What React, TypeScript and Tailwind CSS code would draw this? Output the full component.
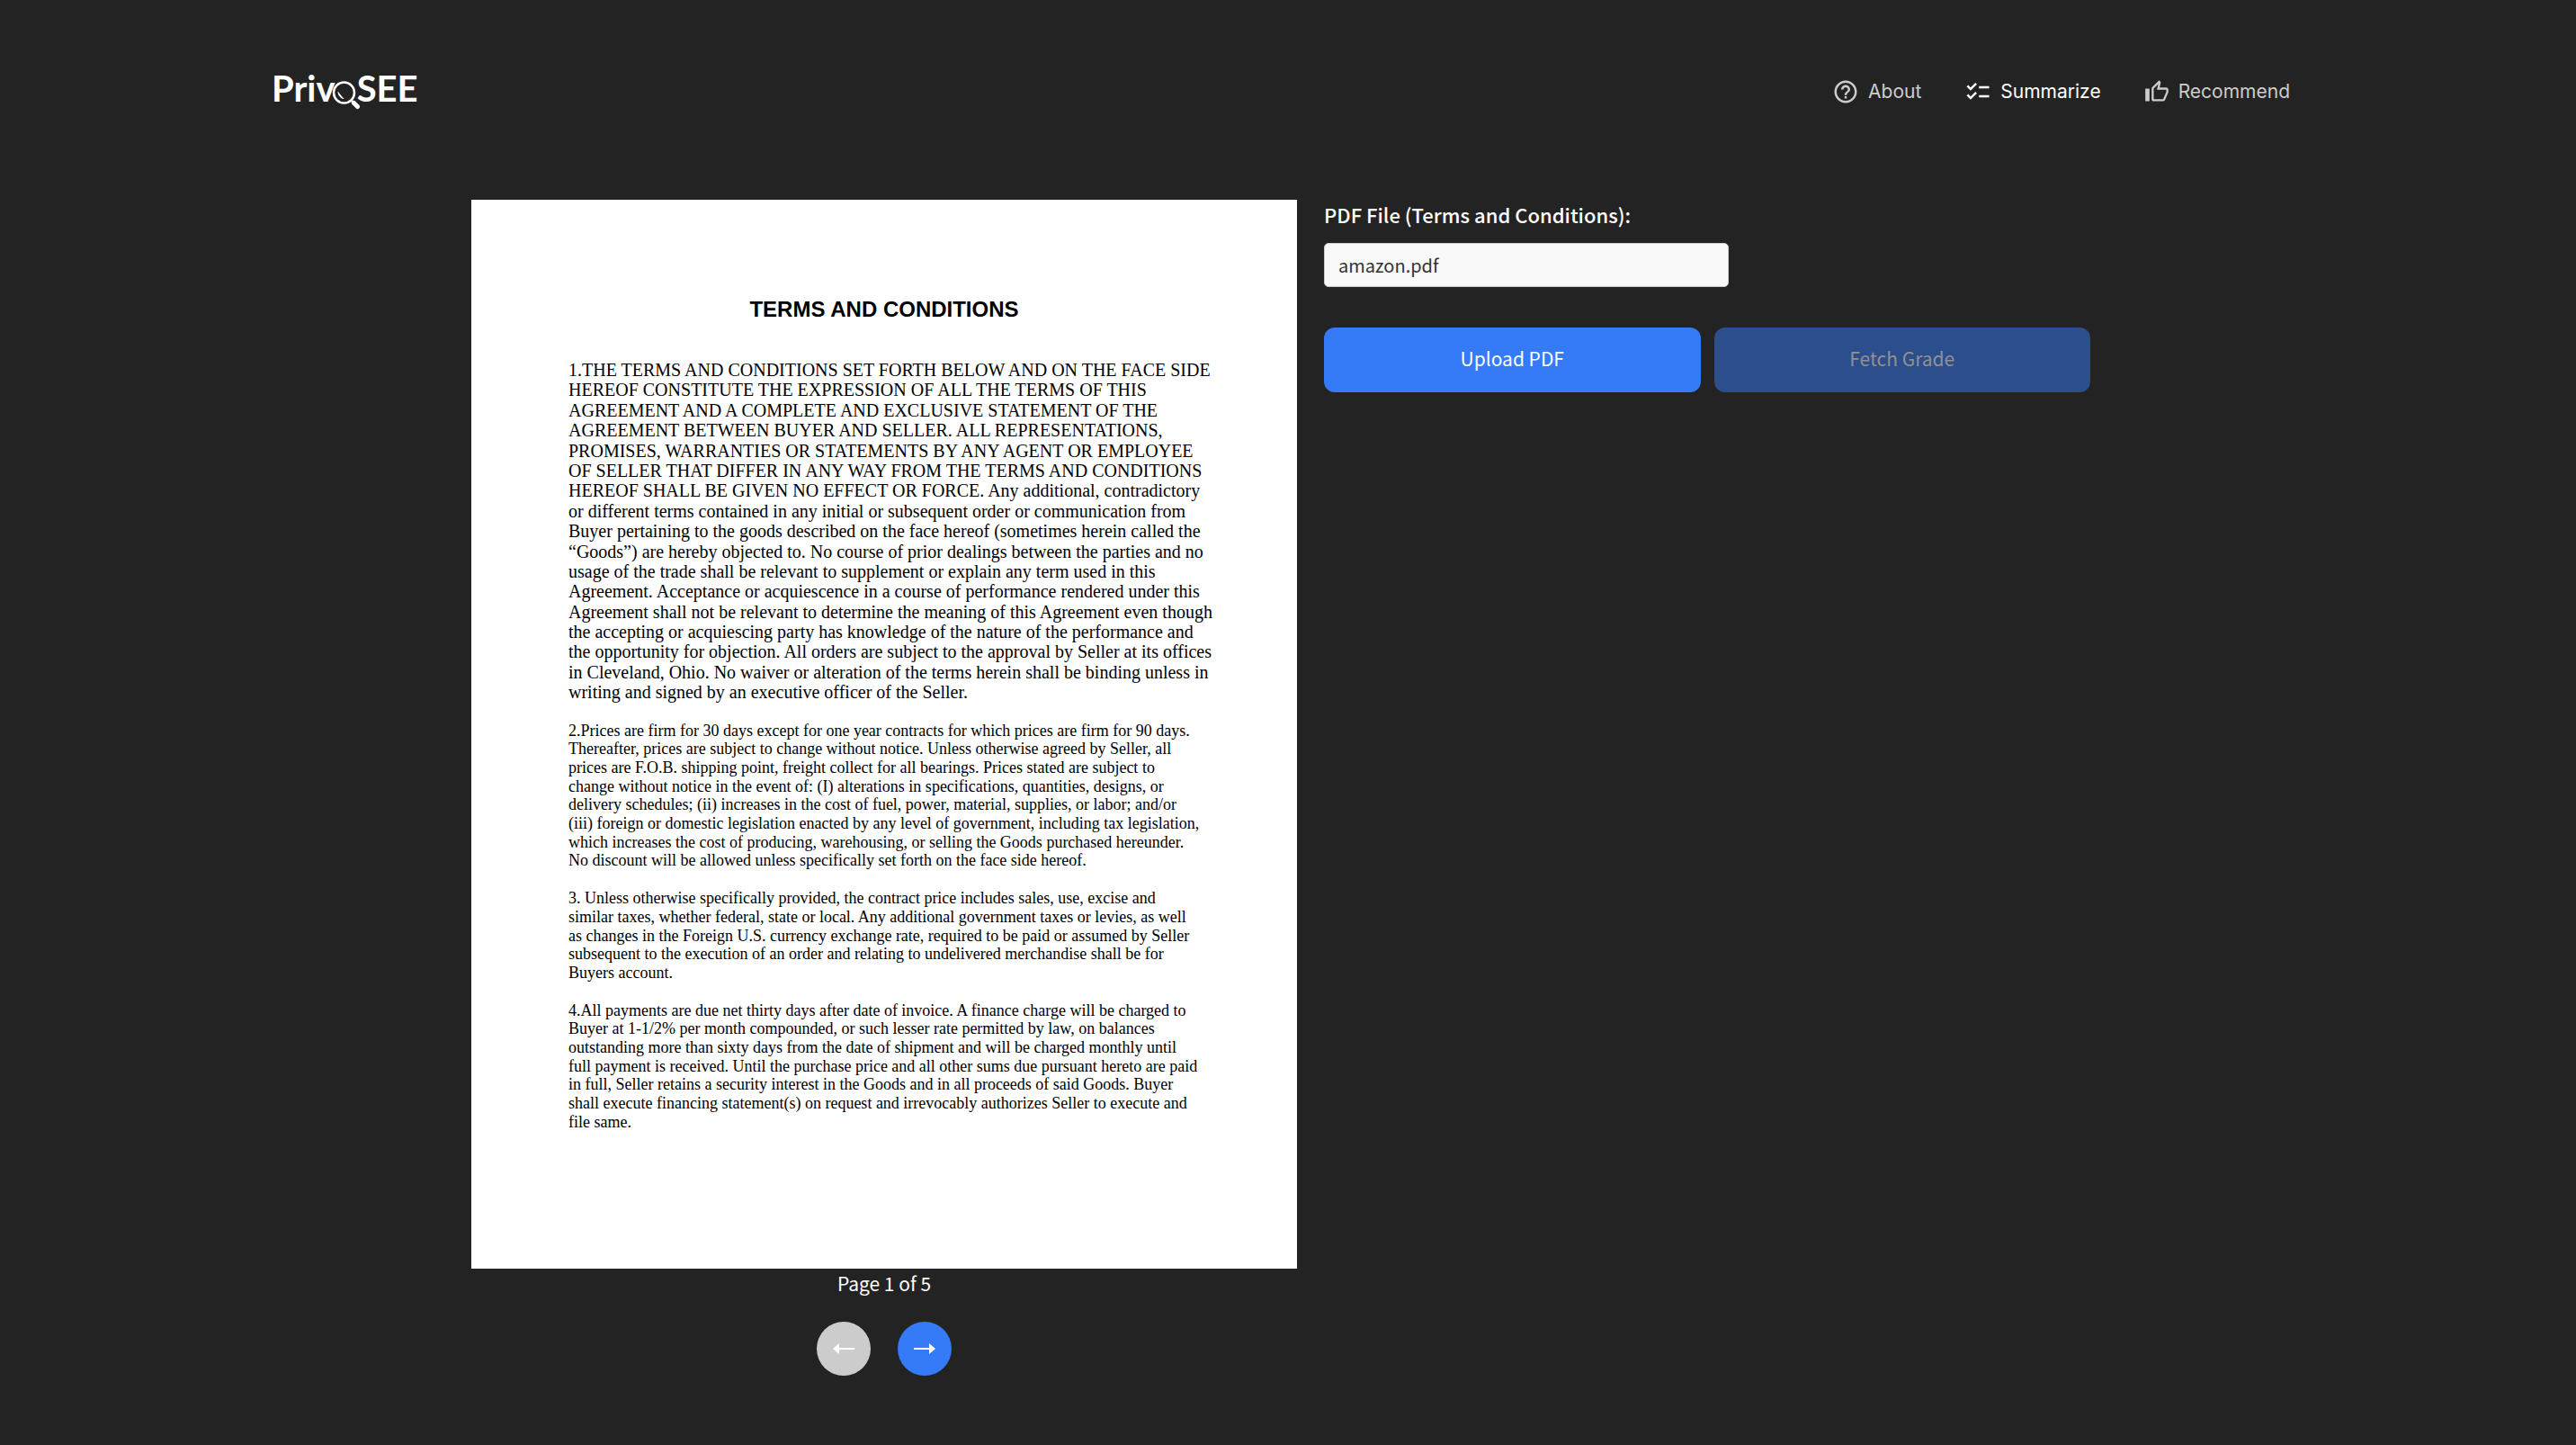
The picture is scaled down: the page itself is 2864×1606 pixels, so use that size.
import { MdChecklist, MdHelpOutline, MdOutlineThumbUp } from "react-icons/md";

const sections = [
  {
    style: "text-[20px] leading-[1.12]",
    lines: [
      "1.THE TERMS AND CONDITIONS SET FORTH BELOW AND ON THE FACE SIDE",
      "HEREOF CONSTITUTE THE EXPRESSION OF ALL THE TERMS OF THIS",
      "AGREEMENT AND A COMPLETE AND EXCLUSIVE STATEMENT OF THE",
      "AGREEMENT BETWEEN BUYER AND SELLER. ALL REPRESENTATIONS,",
      "PROMISES, WARRANTIES OR STATEMENTS BY ANY AGENT OR EMPLOYEE",
      "OF SELLER THAT DIFFER IN ANY WAY FROM THE TERMS AND CONDITIONS",
      "HEREOF SHALL BE GIVEN NO EFFECT OR FORCE. Any additional, contradictory",
      "or different terms contained in any initial or subsequent order or communication from",
      "Buyer pertaining to the goods described on the face hereof (sometimes herein called the",
      "“Goods”) are hereby objected to. No course of prior dealings between the parties and no",
      "usage of the trade shall be relevant to supplement or explain any term used in this",
      "Agreement. Acceptance or acquiescence in a course of performance rendered under this",
      "Agreement shall not be relevant to determine the meaning of this Agreement even though",
      "the accepting or acquiescing party has knowledge of the nature of the performance and",
      "the opportunity for objection. All orders are subject to the approval by Seller at its offices",
      "in Cleveland, Ohio. No waiver or alteration of the terms herein shall be binding unless in",
      "writing and signed by an executive officer of the Seller.",
    ],
  },
  {
    style: "text-[18px] leading-[1.15]",
    lines: [
      "2.Prices are firm for 30 days except for one year contracts for which prices are firm for 90 days.",
      "Thereafter, prices are subject to change without notice. Unless otherwise agreed by Seller, all",
      "prices are F.O.B. shipping point, freight collect for all bearings. Prices stated are subject to",
      "change without notice in the event of: (I) alterations in specifications, quantities, designs, or",
      "delivery schedules; (ii) increases in the cost of fuel, power, material, supplies, or labor; and/or",
      "(iii) foreign or domestic legislation enacted by any level of government, including tax legislation,",
      "which increases the cost of producing, warehousing, or selling the Goods purchased hereunder.",
      "No discount will be allowed unless specifically set forth on the face side hereof.",
    ],
  },
  {
    style: "text-[18px] leading-[1.15]",
    lines: [
      "3. Unless otherwise specifically provided, the contract price includes sales, use, excise and",
      "similar taxes, whether federal, state or local. Any additional government taxes or levies, as well",
      "as changes in the Foreign U.S. currency exchange rate, required to be paid or assumed by Seller",
      "subsequent to the execution of an order and relating to undelivered merchandise shall be for",
      "Buyers account.",
    ],
  },
  {
    style: "text-[18px] leading-[1.15]",
    lines: [
      "4.All payments are due net thirty days after date of invoice. A finance charge will be charged to",
      "Buyer at 1-1/2% per month compounded, or such lesser rate permitted by law, on balances",
      "outstanding more than sixty days from the date of shipment and will be charged monthly until",
      "full payment is received. Until the purchase price and all other sums due pursuant hereto are paid",
      "in full, Seller retains a security interest in the Goods and in all proceeds of said Goods. Buyer",
      "shall execute financing statement(s) on request and irrevocably authorizes Seller to execute and",
      "file same.",
    ],
  },
];

const navItems = [
  { label: "About", Icon: MdHelpOutline, iconSize: "size-[30px]", active: false },
  { label: "Summarize", Icon: MdChecklist, iconSize: "size-[30px]", active: true },
  { label: "Recommend", Icon: MdOutlineThumbUp, iconSize: "size-[28px]", active: false },
];

function Logo() {
  return (
    <a
      href="#home"
      aria-label="PrivoSEE"
      className="flex items-center font-['Lato'] text-[40px] leading-[48px] font-bold text-white"
    >
      <span>Priv</span>
      <svg viewBox="0 0 32 32" className="mt-4 -mr-1 -ml-1 size-8" fill="none" stroke="currentColor">
        <circle cx="13.500" cy="13" r="11.500" strokeWidth="2.500" />
        <path d="M7 12.500c.4 3.800 2.600 6.300 6 7.200-2-1.900-3.600-4-6-7.200z" strokeWidth="1" fill="currentColor" />
        <path d="M22 22l2 2" strokeWidth="2.500" />
        <path d="M24.500 24.500l4 4" strokeWidth="5" strokeLinecap="round" />
      </svg>
      <span>SEE</span>
    </a>
  );
}

function Header() {
  return (
    <header className="mx-auto flex w-full max-w-[2244px] items-end justify-between pt-[74px]">
      <Logo />
      <nav className="flex items-center gap-12 font-['Inter'] text-[21px] leading-[40px]">
        {navItems.map(({ label, Icon, iconSize, active }) => (
          <a
            key={label}
            href={`#${label.toLowerCase()}`}
            aria-current={active ? "page" : undefined}
            className={`flex items-center gap-[10px] ${active ? "text-white" : "text-[#cccccc]"}`}
          >
            <Icon className={iconSize} />
            {label}
          </a>
        ))}
      </nav>
    </header>
  );
}

function DocumentPage() {
  return (
    <article className="min-h-[1188px] w-full bg-white px-[108px] pt-[108px] text-black">
      <h1 className="mb-[42px] text-center font-['Liberation_Sans'] text-[24px] leading-[28px] font-bold">
        TERMS AND CONDITIONS
      </h1>
      <div className="flex flex-col gap-[21px] font-['Liberation_Serif'] whitespace-nowrap">
        {sections.map((section) => (
          <p key={section.lines[0]} className={section.style}>
            {section.lines.map((line) => (
              <span key={line} className="block">
                {line}
              </span>
            ))}
          </p>
        ))}
      </div>
    </article>
  );
}

function Arrow({ className = "" }: { className?: string }) {
  return (
    <svg viewBox="0 0 24 12" className={`h-3 w-6 ${className}`} fill="currentColor">
      <path d="M0 5h17V0l7 6-7 6V7H0z" />
    </svg>
  );
}

export default function App() {
  return (
    <div className="min-h-screen bg-[#232323] pr-4 font-['Noto_Sans_CJK_SC',sans-serif] text-white">
      <Header />
      <main className="mx-auto flex w-full max-w-[1800px] items-start gap-[30px] pt-[100px]">
        <section className="flex w-[918px] shrink-0 flex-col items-center">
          <DocumentPage />
          <p className="text-[21px] leading-[32px]">Page 1 of 5</p>
          <div className="mt-[27px] flex gap-[30px]">
            <button
              type="button"
              disabled
              aria-label="Previous page"
              className="flex size-[60px] items-center justify-center rounded-full bg-[#cccccc]"
            >
              <Arrow className="rotate-180" />
            </button>
            <button
              type="button"
              aria-label="Next page"
              className="flex size-[60px] items-center justify-center rounded-full bg-[#357af6]"
            >
              <Arrow />
            </button>
          </div>
        </section>
        <form className="flex flex-1 flex-col">
          <label htmlFor="pdf-file" className="text-[22px] leading-[32px] font-medium">
            PDF File (Terms and Conditions):
          </label>
          <input
            id="pdf-file"
            type="text"
            readOnly
            value="amazon.pdf"
            className="mt-4 h-[49px] w-[450px] rounded-[5px] border border-[#cccccc] bg-[#f9f9f9] px-[15px] text-[20px] text-[#333333]"
          />
          <div className="mt-[45px] grid grid-cols-2 gap-[15px] text-[21px] leading-[32px]">
            <button type="button" className="rounded-xl bg-[#357af6] pt-[18px] pb-[22px]">
              Upload PDF
            </button>
            <button type="button" disabled className="rounded-xl bg-[#2c4e8c] pt-[18px] pb-[22px] text-[#919191]">
              Fetch Grade
            </button>
          </div>
        </form>
      </main>
    </div>
  );
}
